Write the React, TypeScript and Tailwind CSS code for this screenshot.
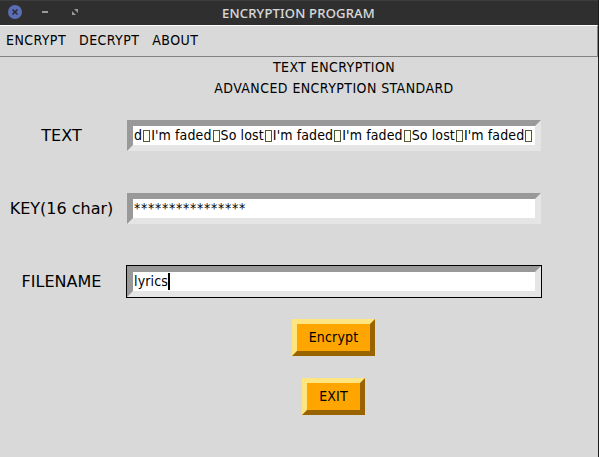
const ui = "font-['DejaVu_Sans_Condensed','DejaVu_Sans',sans-serif] [font-stretch:condensed]";

function Missing() {
  return <span className="mx-px inline-block h-[12px] w-[7px] border border-[#55553a] bg-[#fffff0] align-[-2px]" />;
}

function TitleBar() {
  return (
    <header className="flex h-[25px] items-center border-t border-[#3c3c3c] bg-[#2f2f2f]">
      <svg className="block h-6 w-[90px] flex-none" viewBox="0 1 90 24">
        <circle cx="15" cy="12" r="7" fill="#5b6eb5" />
        <path d="M12.5 9.5l5 5M17.5 9.5l-5 5" stroke="#2b2b34" strokeWidth="1.6" />
        <path d="M42 11h6v2h-6z" fill="#999" />
        <path d="M74 9h4v4zM72 11l4 4h-4z" fill="#999" />
      </svg>
      <h1 className="ml-[132px] whitespace-nowrap font-['Noto_Sans',sans-serif] text-[13px] font-medium leading-6 tracking-[0.2px] text-[#d8d8d8] [-webkit-text-stroke:0.1px_#d8d8d8]">ENCRYPTION PROGRAM</h1>
    </header>
  );
}

function Field({ label, children, focused = false, spacing }: { label: string; children: React.ReactNode; focused?: boolean; spacing: string }) {
  return (
    <div className="flex h-[33px] items-center">
      <label className="w-[124px] flex-none whitespace-nowrap pr-px text-center font-['DejaVu_Sans',sans-serif] text-[16px] leading-5 [font-stretch:normal]">{label}</label>
      <div className={`ml-[2px] border ${focused ? "border-black" : "border-transparent"}`}>
        <div className={`${spacing} flex h-[31px] w-[414px] items-center overflow-hidden whitespace-pre border-[6px] border-t-[#999] border-r-[#e5e5e5] border-b-[#e5e5e5] border-l-[#999] bg-white pl-px text-[14px] leading-[19px]`}>
          {children}
        </div>
      </div>
    </div>
  );
}

function Button({ text, size }: { text: string; size: string }) {
  return (
    <button className={`${size} block h-[37px] border-[5px] border-t-[#ffe57f] border-r-[#996300] border-b-[#996300] border-l-[#ffe57f] bg-[#ffa500] pb-[2px] text-[14px] leading-5 tracking-[0.15px]`}>
      {text}
    </button>
  );
}

export default function App() {
  return (
    <div className={`${ui} relative flex h-[457px] w-[599px] flex-col overflow-hidden border-r border-[#1c1c1c] bg-[#d9d9d9] text-black`}>
      <TitleBar />
      <nav className="flex h-8 flex-none items-center gap-[13px] border-t border-r border-b border-t-white border-r-[#828282] border-b-[#828282] pb-[2px] pl-[6px] text-[14px] leading-5 tracking-[0.43px]">
        <span>ENCRYPT</span>
        <span>DECRYPT</span>
        <span>ABOUT</span>
      </nav>
      <div className="ml-[70px] text-center text-[14px] leading-[21px] tracking-[0.43px]">
        <p>TEXT ENCRYPTION</p>
        <p>ADVANCED ENCRYPTION STANDARD</p>
      </div>
      <main className="mt-5 flex flex-col gap-10">
        <Field label="TEXT" spacing="tracking-[0.12px]">
          <span>d<Missing />I'm faded<Missing />So lost<Missing />I'm faded<Missing />I'm faded<Missing />So lost<Missing />I'm faded<Missing /></span>
        </Field>
        <Field label="KEY(16 char)" spacing="tracking-[0.7px]">****************</Field>
        <Field label="FILENAME" focused spacing="tracking-[0.15px]">
          lyrics<span className="h-[17px] w-[2px] bg-black" />
        </Field>
      </main>
      <div className="ml-[69px] mt-[21px] flex flex-col items-center gap-[22px]">
        <Button text="Encrypt" size="w-[83px]" />
        <Button text="EXIT" size="w-[63px]" />
      </div>
    </div>
  );
}
